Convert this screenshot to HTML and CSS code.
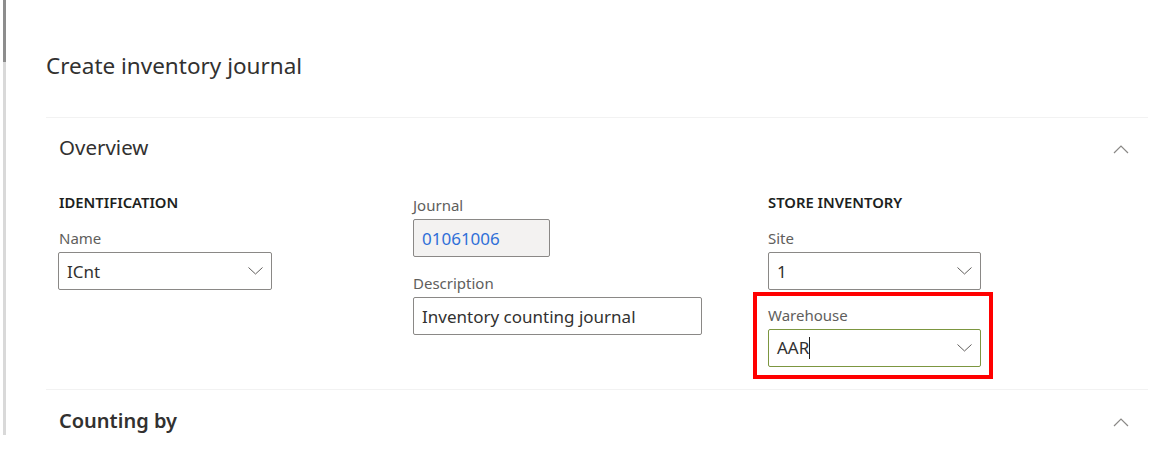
FILE: index.html
```html
<html>
	<head>
		<link rel="stylesheet" href="styles.css">
	</head>
	<body>
		<div class="page">
			<div class="rail"></div>
			<div class="main">
				<div class="title">Create inventory journal</div>

				<div class="section">
					<div class="section-head">
						<span class="section-name">Overview</span>
						<svg class="collapse" width="16" height="9" viewBox="0 0 16 9"><path d="M1 8 L8 1 L15 8" fill="none" stroke="#8a8886" stroke-width="1.2"/></svg>
					</div>
					<div class="section-body">
						<div class="col">
							<div class="group">IDENTIFICATION</div>
							<div class="field">
								<label>Name</label>
								<div class="box name-box">
									<span>ICnt</span>
									<svg class="drop" width="15" height="8" viewBox="0 0 15 8"><path d="M0.5 0.5 L7.5 7 L14.5 0.5" fill="none" stroke="#605e5c" stroke-width="1"/></svg>
								</div>
							</div>
						</div>
						<div class="col col-mid">
							<div class="field">
								<label>Journal</label>
								<div class="box journal-box">01061006</div>
							</div>
							<div class="field spaced">
								<label>Description</label>
								<div class="box desc-box">Inventory counting journal</div>
							</div>
						</div>
						<div class="col">
							<div class="group">STORE INVENTORY</div>
							<div class="field">
								<label>Site</label>
								<div class="box site-box">
									<span>1</span>
									<svg class="drop" width="15" height="8" viewBox="0 0 15 8"><path d="M0.5 0.5 L7.5 7 L14.5 0.5" fill="none" stroke="#605e5c" stroke-width="1"/></svg>
								</div>
							</div>
							<div class="field warehouse highlight">
								<label>Warehouse</label>
								<div class="box site-box focused">
									<span class="typed">AAR</span>
									<svg class="drop" width="15" height="8" viewBox="0 0 15 8"><path d="M0.5 0.5 L7.5 7 L14.5 0.5" fill="none" stroke="#605e5c" stroke-width="1"/></svg>
								</div>
							</div>
						</div>
					</div>
				</div>

				<div class="section">
					<div class="section-head tall">
						<span class="section-name strong">Counting by</span>
						<svg class="collapse" width="16" height="9" viewBox="0 0 16 9"><path d="M1 8 L8 1 L15 8" fill="none" stroke="#8a8886" stroke-width="1.2"/></svg>
					</div>
				</div>
			</div>
		</div>
	</body>
</html>
```

FILE: styles.css
```css
body{
	margin: 0;
	background: #fff;
	color: #323130;
	font-family: "Noto Sans", "Open Sans", sans-serif;
}
.page{
	display: flex;
	height: 457px;
	overflow: hidden;
}
.rail{
	width: 3px;
	margin-left: 3px;
	height: 435px;
	flex-shrink: 0;
	background: linear-gradient(#8d8d8d 0, #8d8d8d 62px, #d9d9d9 62px);
}
.main{
	flex: 1;
	padding: 0 12px 0 40px;
}
.title{
	font-size: 22.5px;
	line-height: 28px;
	padding-top: 52px;
	margin-bottom: 37px;
	color: #323130;
}
.section{
	border-top: 1px solid #f2f2f2;
}
.section-head{
	display: flex;
	justify-content: space-between;
	align-items: center;
	height: 62px;
	padding: 0 19px 0 13px;
}
.section-head.tall{
	height: 64px;
}
.section-name{
	font-size: 20.5px;
	margin-top: -4px;
}
.section-name.strong{
	font-size: 20px;
	font-weight: 600;
}
.section-body{
	display: grid;
	grid-template-columns: 354px 355px 214px;
	padding: 0 0 22px 13px;
}
.group{
	margin-top: 14px;
	font-size: 14.8px;
	height: 18px;
	line-height: 16px;
	font-weight: 600;
	color: #201f1e;
}
.field{
	margin-top: 18px;
	position: relative;
}
.col-mid .field:first-child{
	margin-top: 17px;
}
.field.warehouse{
	margin-top: 17px;
}
label{
	display: block;
	height: 18px;
	line-height: 16px;
	font-size: 15px;
	color: #605e5c;
	margin-bottom: 4px;
}
.box{
	box-sizing: border-box;
	height: 38px;
	border: 1px solid #8a8886;
	border-radius: 2px;
	display: flex;
	align-items: center;
	justify-content: space-between;
	padding: 0 8px 0 8px;
	font-size: 17px;
	color: #323130;
}
.name-box{
	width: 214px;
	margin-left: -1px;
}
.journal-box{
	width: 137px;
	background: #f3f2f1;
	color: #2f6fd8;
}
.desc-box{
	width: 289px;
}
.site-box{
	width: 213px;
}
.focused{
	border-color: #7c9640;
}
.typed{
	border-right: 1px solid #201f1e;
	line-height: 22px;
}
.highlight::before{
	content: "";
	position: absolute;
	top: -15px;
	left: -15px;
	right: -11px;
	bottom: -12px;
	border: 4px solid #ff0000;
	pointer-events: none;
}
```
